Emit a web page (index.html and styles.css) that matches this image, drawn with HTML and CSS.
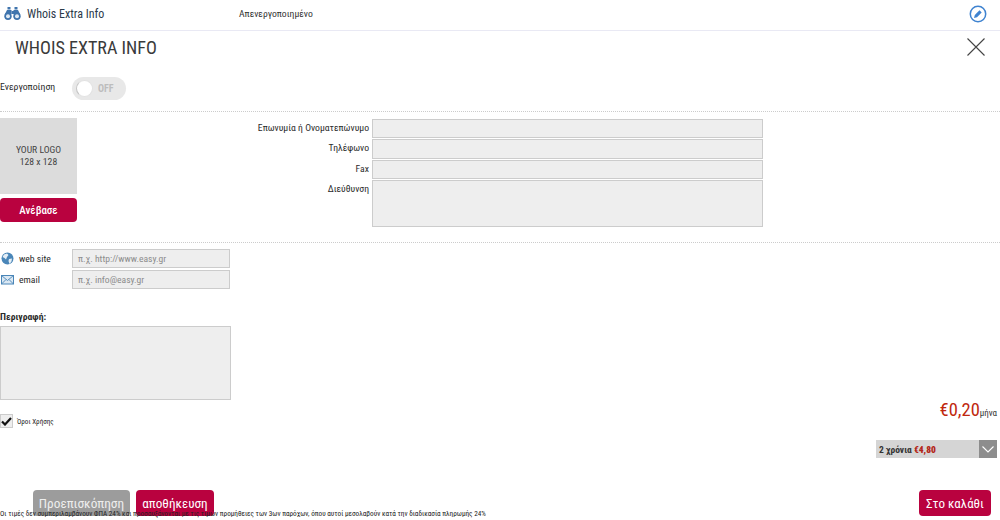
FILE: index.html
```html
<!DOCTYPE html>
<html lang="el">
<head>
<meta charset="utf-8">
<title>Whois Extra Info</title>
<link rel="stylesheet" href="styles.css">
</head>
<body>
<div class="page">
  <header class="topbar">
    <svg class="binoculars" width="17" height="13" viewBox="0 0 17 13"><g fill="#3f74ad"><path d="M3.500 0h3v2.500h-3zM10.500 0h3v2.500h-3zM3 3h4.500v4H1z"/><path d="M9.500 3H14l2 4H9.500zM7.500 4h2v3h-2z"/><circle cx="4" cy="9.300" r="3.700"/><circle cx="13" cy="9.300" r="3.700"/></g><circle cx="4" cy="9.300" r="2" fill="#dfe9f3"/><circle cx="13" cy="9.300" r="2" fill="#dfe9f3"/></svg>
    <span class="app-name">Whois Extra Info</span>
    <span class="status">Απενεργοποιημένο</span>
    <svg class="edit-icon" width="18" height="18" viewBox="0 0 18 18"><circle cx="9" cy="9" r="7.700" fill="none" stroke="#3f83d0" stroke-width="1.500"/><path d="M5 13l.8-3 4.700-4.700 2.200 2.200L8 12.200z" fill="#3f83d0"/></svg>
  </header>
  <div class="title-row">
    <h1>WHOIS EXTRA INFO</h1>
    <svg class="close" width="18" height="18" viewBox="0 0 18 18"><path d="M.5.500l17 17M17.500.500l-17 17" stroke="#444" stroke-width="1.100" fill="none"/></svg>
  </div>
  <div class="toggle-row">
    <span class="toggle-label">Ενεργοποίηση</span>
    <div class="toggle"><span class="knob"></span><span class="off">OFF</span></div>
  </div>
  <section class="company">
    <div class="logo-col">
      <div class="logo">YOUR LOGO<br>128 x 128</div>
      <button class="btn btn-red upload">Ανέβασε</button>
    </div>
    <div class="fields">
      <label class="f-label">Επωνυμία ή Ονοματεπώνυμο</label><div class="box b1"></div>
      <label class="f-label">Τηλέφωνο</label><div class="box b2"></div>
      <label class="f-label">Fax</label><div class="box b1"></div>
      <label class="f-label">Διεύθυνση</label><div class="box b3"></div>
    </div>
  </section>
  <section class="contact">
    <div class="c-row">
      <svg width="13" height="13" viewBox="0 0 13 13"><circle cx="6.500" cy="6.500" r="6" fill="#4a86b8"/><path d="M3 2.500l3-1 1.500 1.500-1.500 2-1 2.500-1.500-1.500L1.500 5zM8 7l3-.5-.5 3L8.500 12 7.500 9z" fill="#e6eff6"/></svg>
      <span class="c-label">web site</span>
      <div class="c-input">π.χ. http://www.easy.gr</div>
    </div>
    <div class="c-row">
      <svg width="13" height="13" viewBox="0 0 13 13"><rect x=".5" y="2.500" width="12" height="8.500" fill="#dbe8f3" stroke="#4a86b8"/><path d="M.5 2.500l6 5 6-5M.5 11l4.500-4.500M12.500 11L8 6.500" fill="none" stroke="#4a86b8" stroke-width=".9"/></svg>
      <span class="c-label">email</span>
      <div class="c-input">π.χ. info@easy.gr</div>
    </div>
  </section>
  <div class="desc-label">Περιγραφή:</div>
  <div class="desc-box"></div>
  <section class="bottom">
    <div class="terms">
      <span class="check"><svg width="11" height="9" viewBox="0 0 11 9"><path d="M1 4.500l3 3 6-6.500" fill="none" stroke="#111" stroke-width="2.200"/></svg></span>
      <span class="terms-text">Όροι Χρήσης</span>
    </div>
    <div class="pricing">
      <div class="price"><span class="amount">€0,20</span><span class="per">μήνα</span></div>
      <div class="select">
        <span class="sel-text">2 χρόνια <b>€4,80</b></span>
        <span class="sel-arrow"><svg width="12" height="7" viewBox="0 0 12 7"><path d="M.5.500L6 6l5.500-5.500" fill="none" stroke="#fff" stroke-width="1.100"/></svg></span>
      </div>
    </div>
  </section>
  <footer class="actions">
    <button class="btn btn-grey preview">Προεπισκόπηση</button>
    <button class="btn btn-red save">αποθήκευση</button>
    <button class="btn btn-red cart">Στο καλάθι</button>
  </footer>
  <p class="note">Οι τιμές δεν συμπεριλαμβάνουν ΦΠΑ 24% και προσαυξάνονται με τις τιμών προμήθειες των 3ων παρόχων, όπου αυτοί μεσολαβούν κατά την διαδικασία πληρωμής 24%</p>
</div>
</body>
</html>
```
FILE: styles.css
```css
* { box-sizing: border-box; }
html, body { margin: 0; padding: 0; background: #fff; }
body { font-family: "Roboto Condensed", "Liberation Sans Narrow", Roboto, sans-serif; color: #2b2b2b; }
.page { position: relative; width: 1000px; height: 520px; overflow: hidden; }

.topbar { display: flex; align-items: center; height: 31px; border-bottom: 1px solid #e9e9f4; padding: 0 13px 3px 4px; }
.binoculars { flex: none; }
.app-name { font-size: 12px; margin-left: 6px; width: 212px; color: #2c3a4a; }
.status { font-size: 9.700px; color: #333; flex: 1; }
.edit-icon { flex: none; }

.title-row { display: flex; justify-content: space-between; align-items: center; height: 32px; padding: 0 15px; }
h1 { margin: 0; font-size: 18.100px; font-weight: 400; color: #3a3a3a; }

.toggle-row { display: flex; align-items: flex-start; height: 35px; margin-top: 14px; border-bottom: 1px dotted #ccc; }
.toggle-label { width: 72px; font-size: 9.800px; line-height: 19px; }
.toggle { display: flex; align-items: center; width: 54px; height: 23px; border-radius: 12px; background: #e8e8e8; padding-left: 4px; }
.knob { width: 17px; height: 17px; border-radius: 50%; background: #fff; border: 1px solid #e2e2e2; border-left-color: #c4c4c4; }
.off { font-size: 10px; font-weight: 700; color: #bdbdbd; margin-left: 5px; }

.company { display: flex; height: 131px; padding-top: 6px; border-bottom: 1px dotted #ccc; }
.logo-col { width: 77px; flex: none; }
.logo { display: flex; align-items: center; justify-content: center; text-align: center; width: 77px; height: 76px; background: #dcdcdc; font-size: 9.700px; line-height: 12px; color: #444; }
.btn { display: block; border: 0; border-radius: 4px; color: #fff; font-family: inherit; padding: 0; }
.btn-red { background: #b9023f; }
.btn-grey { background: #9c9c9c; }
.upload { width: 77px; height: 24px; margin-top: 4px; font-size: 11px; font-weight: 500; }

.fields { display: grid; grid-template-columns: 292px 391px; column-gap: 3px; row-gap: 1px; align-content: start; margin-top: 1px; }
.f-label { font-size: 9.700px; line-height: 18px; text-align: right; }
.box { background: #eee; border: 1px solid #ccc; }
.b1 { height: 19px; }
.b2 { height: 20px; }
.b3 { height: 47px; }

.contact { display: flex; flex-direction: column; gap: 2px; padding-top: 6px; }
.c-row { display: flex; align-items: center; height: 19px; padding-left: 1px; }
.c-label { font-size: 9.700px; width: 53px; margin-left: 5px; }
.c-input { width: 158px; height: 19px; background: #eee; border: 1px solid #ccc; font-size: 9.600px; line-height: 17px; padding-left: 5px; color: #8c8c8c; }

.desc-label { font-size: 9.700px; font-weight: 700; margin-top: 21px; line-height: 14px; }
.desc-box { width: 231px; height: 74px; margin-top: 2px; background: #eee; border: 1px solid #ccc; }

.bottom { display: flex; justify-content: space-between; align-items: flex-start; }
.terms { display: flex; align-items: center; margin-top: 14px; }
.check { display: flex; align-items: center; justify-content: center; width: 13px; height: 14px; background: #eee; border: 1px solid #ccc; }
.terms-text { font-size: 7.100px; margin-left: 4px; color: #222; }

.pricing { display: flex; flex-direction: column; align-items: flex-end; padding-right: 3px; }
.price { color: #c0280f; margin-top: 0; line-height: 20px; }
.amount { font-size: 18.500px; }
.per { font-size: 9px; color: #333; }
.select { display: flex; align-items: center; justify-content: space-between; width: 121px; height: 18px; margin-top: 17px; background: #d5d5d5; }
.sel-text { font-size: 9.500px; font-weight: 700; margin-left: 3px; color: #333; }
.sel-text b { color: #b3261a; }
.sel-arrow { display: flex; align-items: center; justify-content: center; width: 18px; height: 18px; background: #8d8d8d; }

.actions { display: flex; align-items: flex-start; margin-top: 32px; padding: 0 9px 0 33px; }
.preview { width: 97px; height: 26px; font-size: 13.300px; color: #eee; }
.save { width: 78px; height: 26px; font-size: 13.200px; margin-left: 6px; }
.cart { width: 72px; height: 26px; font-size: 13px; margin-left: auto; }

.note { position: absolute; left: 0; top: 509px; margin: 0; font-size: 7.230px; line-height: 10px; color: #222; white-space: nowrap; }
```
